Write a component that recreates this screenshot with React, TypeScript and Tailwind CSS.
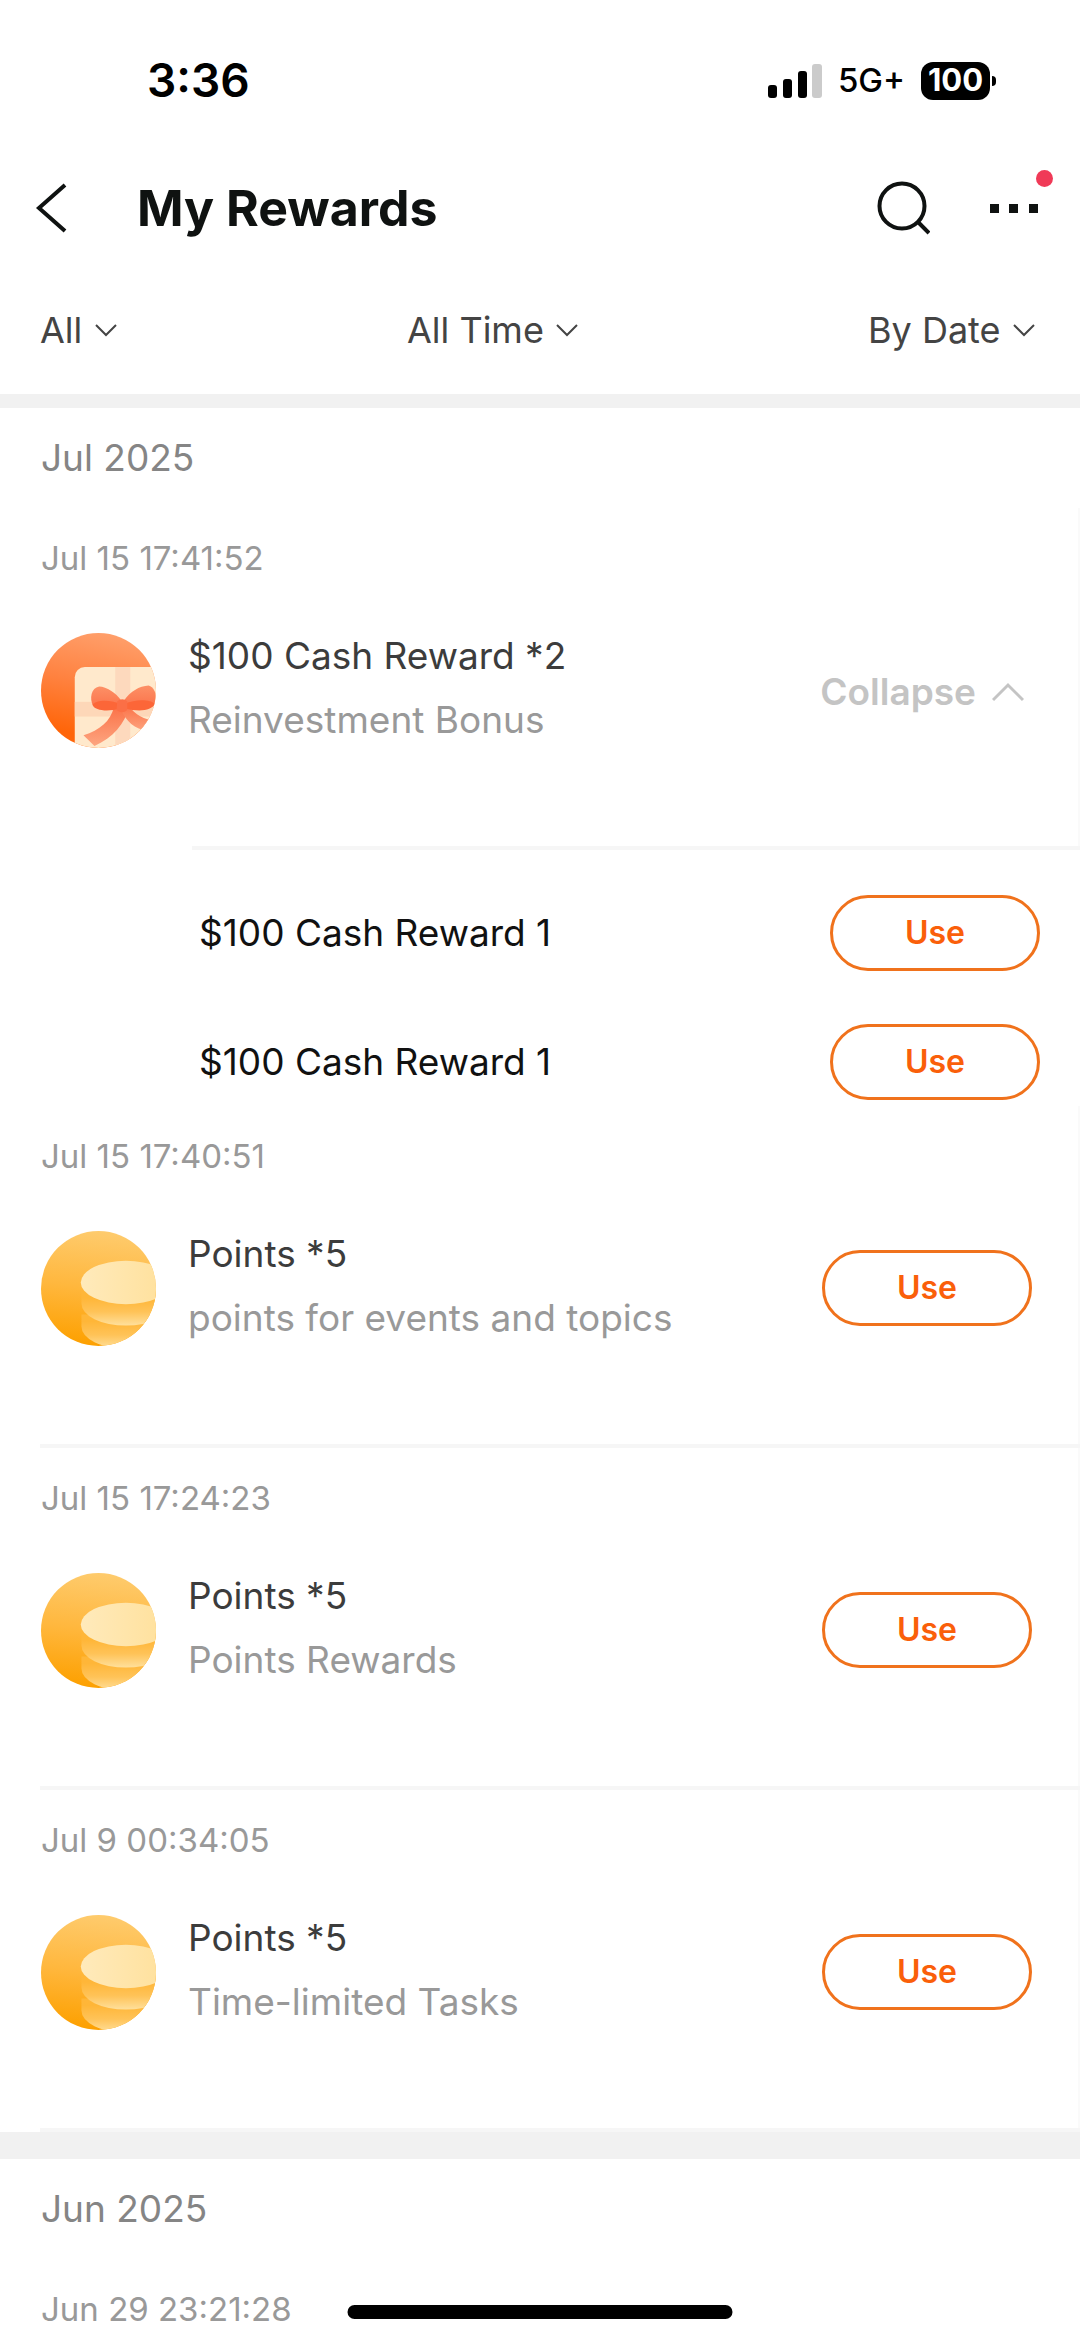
import { useId } from "react";

type Reward = {
  time: string;
  icon: "gift" | "coins";
  title: string;
  description: string;
  items?: string[];
};

const filters = [
  { label: "Reward type", value: "All" },
  { label: "Period", value: "All Time" },
  { label: "Sort order", value: "By Date" },
];

const months: { name: string; rewards: Reward[] }[] = [
  {
    name: "Jul 2025",
    rewards: [
      {
        time: "Jul 15 17:41:52",
        icon: "gift",
        title: "$100 Cash Reward *2",
        description: "Reinvestment Bonus",
        items: ["$100 Cash Reward 1", "$100 Cash Reward 1"],
      },
      {
        time: "Jul 15 17:40:51",
        icon: "coins",
        title: "Points *5",
        description: "points for events and topics",
      },
      {
        time: "Jul 15 17:24:23",
        icon: "coins",
        title: "Points *5",
        description: "Points Rewards",
      },
      {
        time: "Jul 9 00:34:05",
        icon: "coins",
        title: "Points *5",
        description: "Time-limited Tasks",
      },
    ],
  },
];

const GiftIcon = () => {
  const id = useId();
  return (
    <svg className="size-[115px] shrink-0" viewBox="0 0 344 344" aria-hidden="true">
      <defs>
        <linearGradient id={id + "bg"} x1="0.6" y1="0" x2="0.4" y2="1">
          <stop offset="0" stopColor="#ff9f6b" />
          <stop offset="0.45" stopColor="#ff8240" />
          <stop offset="0.9" stopColor="#ff6509" />
        </linearGradient>
        <linearGradient id={id + "tail"} x1="0" y1="0" x2="0" y2="1">
          <stop offset="0" stopColor="#fb7248" />
          <stop offset="1" stopColor="#fda580" />
        </linearGradient>
        <linearGradient id={id + "loop"} x1="0" y1="0" x2="0" y2="1">
          <stop offset="0" stopColor="#fd9066" />
          <stop offset="1" stopColor="#fb7048" />
        </linearGradient>
        <clipPath id={id + "clip"}>
          <circle cx="172" cy="172" r="172" />
        </clipPath>
      </defs>
      <g clipPath={`url(#${id}clip)`}>
        <rect width="344" height="344" fill={`url(#${id}bg)`} />
        <rect x="101" y="102" width="280" height="280" rx="30" fill="#ffe9cc" />
        <rect x="222" y="102" width="45" height="242" fill="#fdd9bd" />
        <rect x="101" y="206" width="243" height="44" fill="#fdd3b4" opacity="0.85" />
        <path
          d="M218 222 C208 264 176 290 127 306 L160 338 C216 312 250 274 264 220Z"
          fill={`url(#${id}tail)`}
        />
        <path
          d="M238 226 C254 266 280 286 320 294 L318 274 L344 264 C308 258 282 244 262 218Z"
          fill={`url(#${id}tail)`}
        />
        <path
          d="M240 202 C224 178 196 161 174 160 C150 164 144 196 156 218 C172 230 210 234 236 224Z"
          fill={`url(#${id}loop)`}
        />
        <path
          d="M248 202 C266 176 294 158 322 157 C344 164 348 194 338 216 C320 230 280 232 250 224Z"
          fill={`url(#${id}loop)`}
        />
        <path d="M236 212 C204 198 166 200 154 214 C160 234 204 236 234 226Z" fill="#fc6638" />
        <path d="M250 212 C282 198 326 198 340 212 C332 234 290 236 252 226Z" fill="#fc6638" />
        <path d="M228 204 Q243 192 258 204 L258 230 Q243 244 226 230Z" fill="#fb6f46" />
      </g>
    </svg>
  );
};

const CoinsIcon = () => {
  const id = useId();
  return (
    <svg className="size-[115px] shrink-0" viewBox="0 0 344 344" aria-hidden="true">
      <defs>
        <linearGradient id={id + "bg"} x1="0.55" y1="0" x2="0.45" y2="1">
          <stop offset="0" stopColor="#fecb6d" />
          <stop offset="0.5" stopColor="#ffb73d" />
          <stop offset="1" stopColor="#fda000" />
        </linearGradient>
        <linearGradient id={id + "top"} x1="0" y1="0" x2="1" y2="0">
          <stop offset="0" stopColor="#ffeabb" />
          <stop offset="1" stopColor="#ffe09a" />
        </linearGradient>
        <linearGradient id={id + "edge"} x1="0" y1="0" x2="0" y2="1">
          <stop offset="0.2" stopColor="#ffb638" />
          <stop offset="0.6" stopColor="#ffc358" />
          <stop offset="1" stopColor="#ffe09c" />
        </linearGradient>
        <clipPath id={id + "clip"}>
          <circle cx="172" cy="172" r="172" />
        </clipPath>
      </defs>
      <g clipPath={`url(#${id}clip)`}>
        <rect width="344" height="344" fill={`url(#${id}bg)`} />
        <path d="M121 250 V286 A133 66 0 0 0 387 286 V250Z" fill={`url(#${id}edge)`} />
        <path d="M121 180 V217 A133 66 0 0 0 387 217 V180Z" fill={`url(#${id}edge)`} />
        <ellipse cx="254" cy="154" rx="135" ry="65" fill={`url(#${id}top)`} />
      </g>
    </svg>
  );
};

const StatusBar = () => {
  return (
    <div className="flex h-40 items-center justify-between pt-px pr-[84px] pl-[147px] text-black">
      <span className="text-[46px] font-semibold">3:36</span>
      <div className="flex items-center gap-4">
        <svg width="54" height="34" viewBox="0 0 54 34" aria-hidden="true">
          <rect x="0" y="21" width="9" height="13" rx="3" />
          <rect x="15" y="15" width="9" height="19" rx="3" />
          <rect x="30" y="7" width="9" height="27" rx="3" />
          <rect x="44" y="0" width="10" height="34" rx="3" fill="#cbcbcb" />
        </svg>
        <span className="text-[33px] font-medium">5G+</span>
        <div className="flex items-center gap-0.5">
          <span className="flex h-[38px] w-[69px] items-center justify-center rounded-xl bg-black text-[31px] font-bold text-white">
            100
          </span>
          <span className="h-2.5 w-1 rounded-r-full bg-black" />
        </div>
      </div>
    </div>
  );
};

const Header = () => {
  return (
    <header className="flex h-24 items-center pr-[27px] pl-[35px] text-[#0f1211]">
      <button type="button" aria-label="Back">
        <svg width="32" height="50" viewBox="0 0 32 50" fill="none" stroke="currentColor" strokeWidth="4">
          <path d="M30 2 L4 25 L30 48" />
        </svg>
      </button>
      <h1 className="ml-[70px] flex-1 text-[50px] font-bold">My Rewards</h1>
      <button type="button" aria-label="Search" className="mr-15">
        <svg width="54" height="54" viewBox="0 0 54 54" fill="none" stroke="currentColor" strokeWidth="4">
          <circle cx="26" cy="25" r="22.5" />
          <path d="M41 40 L53 52" />
        </svg>
      </button>
      <button type="button" aria-label="More" className="relative pr-[15px]">
        <svg width="48" height="48" viewBox="0 0 48 48" fill="currentColor">
          <rect x="0" y="20" width="9" height="9" />
          <rect x="19" y="20" width="9" height="9" />
          <rect x="39" y="20" width="9" height="9" />
        </svg>
        <span className="absolute -top-3.5 right-0 size-[17px] rounded-full bg-[#f03a57]" />
      </button>
    </header>
  );
};

const Filters = () => {
  return (
    <div className="flex h-[138px] items-center justify-between pt-2.5 pr-[45px] pl-10 text-[#444]">
      {filters.map((filter) => (
        <label key={filter.value} className="flex items-center gap-3">
          <select aria-label={filter.label} className="appearance-none text-[36px] leading-[50px]">
            <option>{filter.value}</option>
          </select>
          <svg width="22" height="14" viewBox="0 0 22 14" fill="none" stroke="currentColor" strokeWidth="2">
            <path d="M1 2 L11 12 L21 2" />
          </svg>
        </label>
      ))}
    </div>
  );
};

const UseButton = () => {
  return (
    <button
      type="button"
      className="h-[76px] w-[210px] shrink-0 rounded-full border-3 border-[#f0721c] text-[32px] font-semibold text-[#fa5f0a]"
    >
      Use
    </button>
  );
};

const RewardItem = ({ reward }: { reward: Reward }) => {
  return (
    <li>
      <div className="border-r-2 border-[#fafafa] pl-[41px]">
        <p className="text-[33px] leading-[100px] text-[#999]">{reward.time}</p>
        <div className="flex items-center gap-8 pt-4 pr-[46px] pb-[90px]">
          {reward.icon === "gift" ? <GiftIcon /> : <CoinsIcon />}
          <div className="flex-1 pb-1 text-[37px] leading-[64px]">
            <h3 className="text-[#3c3c3c]">{reward.title}</h3>
            <p className="text-[#999]">{reward.description}</p>
          </div>
          {reward.items ? (
            <button
              type="button"
              aria-expanded="true"
              className="mr-2 flex items-center gap-4 pt-1 text-[37px] font-semibold text-[#c4c4c4]"
            >
              Collapse
              <svg width="32" height="20" viewBox="0 0 32 20" fill="none" stroke="currentColor" strokeWidth="3">
                <path d="M1 18 L16 3 L31 18" />
              </svg>
            </button>
          ) : (
            <UseButton />
          )}
        </div>
      </div>
      <div className={reward.items ? "ml-48 h-1 bg-[#f6f6f6]" : "ml-10 h-1 bg-[#f6f6f6]"} />
      {reward.items && (
        <ul className="flex flex-col gap-[53px] pt-[45px] pr-10 pb-1.5 pl-[199px]">
          {reward.items.map((item, index) => (
            <li key={index} className="flex items-center justify-between text-[37px] text-[#111]">
              {item}
              <UseButton />
            </li>
          ))}
        </ul>
      )}
    </li>
  );
};

const MonthTitle = ({ name }: { name: string }) => {
  return <h2 className="pl-[41px] text-[37px] leading-[100px] text-[#858585]">{name}</h2>;
};

const App = () => {
  return (
    <div className="flex h-screen flex-col overflow-hidden bg-white font-['Inter',sans-serif]">
      <StatusBar />
      <Header />
      <Filters />
      <main className="min-h-0 flex-1 overflow-y-auto [scrollbar-width:none]">
        {months.map((month) => (
          <section key={month.name} className="border-t-14 border-[#f1f1f1]">
            <MonthTitle name={month.name} />
            <ul>
              {month.rewards.map((reward) => (
                <RewardItem key={reward.time} reward={reward} />
              ))}
            </ul>
          </section>
        ))}
        <section className="border-t-27 border-[#f1f1f1]">
          <MonthTitle name="Jun 2025" />
          <p className="pl-[41px] text-[33px] leading-[100px] text-[#999]">Jun 29 23:21:28</p>
        </section>
      </main>
      {/* home indicator */}
      <div className="fixed bottom-[22px] left-1/2 h-3.5 w-[385px] -translate-x-1/2 rounded-full bg-black" />
    </div>
  );
};

export default App;
